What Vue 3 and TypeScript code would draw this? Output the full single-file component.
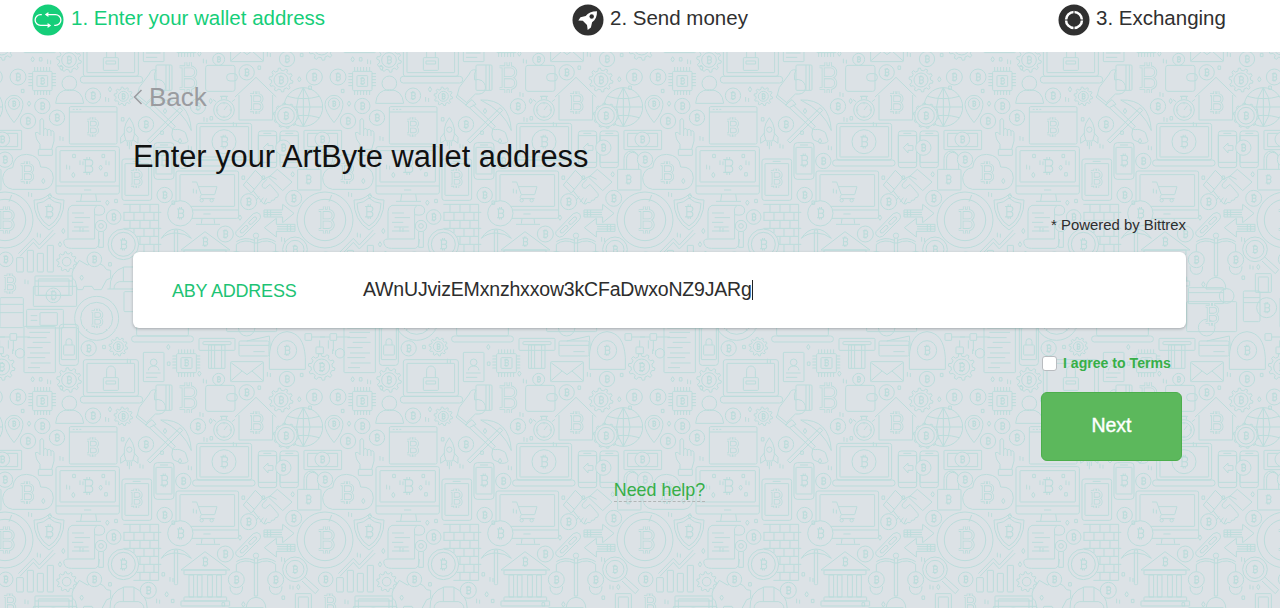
<template>
  <div class="page">
    <header class="steps">
      <div class="step step--active">
        <svg class="step-icon" viewBox="0 0 32 32" aria-hidden="true">
          <circle cx="16" cy="16" r="15.5" fill="currentColor" />
          <g fill="none" stroke="#fff" stroke-width="1.3">
            <path d="M9.800 10.600H8.500a5.400 5.400 0 0 0 0 10.800h9.300" />
            <path d="M22.200 21.400h1.300a5.400 5.400 0 0 0 0-10.800h-9.300" />
          </g>
          <path d="M12.800 10.600l3.600-2.500v5zM19.200 21.400l-3.600-2.500v5z" fill="#fff" />
        </svg>
        <span class="step-label">1. Enter your wallet address</span>
      </div>
      <div class="step">
        <svg class="step-icon" viewBox="0 0 32 32" aria-hidden="true">
          <circle cx="16" cy="16" r="15.5" fill="currentColor" />
          <path
            d="M25 7.200c-5.400.1-9 1.500-11.300 4.700l-5.200 1.300-2.200 3.300 4.500.3 4.200 4.200.7 5 3.200-2.500 1.200-5.300c3.500-2.500 5-5.900 4.900-11z"
            fill="#fff"
          />
          <circle cx="19.700" cy="12.500" r="2.200" fill="currentColor" />
        </svg>
        <span class="step-label">2. Send money</span>
      </div>
      <div class="step">
        <svg class="step-icon" viewBox="0 0 32 32" aria-hidden="true">
          <circle cx="16" cy="16" r="15.5" fill="currentColor" />
          <circle cx="16" cy="16" r="8" fill="none" stroke="#fff" stroke-width="2.500" />
          <path d="M16 6v4M16 22v4M6 16h4M22 16h4" stroke="currentColor" stroke-width="1" />
        </svg>
        <span class="step-label">3. Exchanging</span>
      </div>
    </header>

    <main class="content">
      <svg class="backdrop" aria-hidden="true">
        <defs>
          <g id="doodles" fill="none" stroke="#bbdcdb" stroke-width="3" stroke-linejoin="round">
            <path v-for="(d, i) in shapes" :key="`s${i}`" :d="d" />
            <g v-for="(b, i) in boxes" :key="`r${i}`">
              <rect :x="b[0]" :y="b[1]" :width="b[2]" :height="b[3]" :rx="b[4]" />
            </g>
            <path v-for="(g, i) in gears" :key="`g${i}`" :d="gearPath(g)" />
            <circle
              v-for="(c, i) in rings"
              :key="`c${i}`"
              :cx="c[0]"
              :cy="c[1]"
              :r="c[2]"
              :fill="c[3] ? '#dce2e6' : 'none'"
            />
            <g
              v-for="(m, i) in marks"
              :key="`m${i}`"
              :transform="`translate(${m[0]} ${m[1]}) scale(${m[2]})`"
            >
              <path :d="coinMark" :stroke-width="(m[3] ? 9 : 3.2) / m[2]" />
              <path v-if="m[3]" :d="coinMark" stroke="#dce2e6" :stroke-width="4 / m[2]" />
            </g>
            <path v-for="(s, i) in sparks" :key="`k${i}`" :d="sparkPath(s, i)" />
          </g>
          <pattern
            id="tile"
            width="960"
            height="960"
            patternUnits="userSpaceOnUse"
            patternTransform="translate(0 279) scale(0.33333)"
          >
            <use
              v-for="(o, i) in offsets"
              :key="i"
              href="#doodles"
              :x="o[0]"
              :y="o[1]"
            />
          </pattern>
        </defs>
        <rect width="100%" height="100%" fill="url(#tile)" />
      </svg>

      <div class="panel">
        <a class="back">
          <svg class="back-icon" viewBox="0 0 10 16" aria-hidden="true">
            <path d="M8.500 1L1.500 8l7 7" fill="none" stroke="currentColor" stroke-width="1.5" />
          </svg>
          <span>Back</span>
        </a>
        <h1 class="title">Enter your ArtByte wallet address</h1>
        <p class="powered">* Powered by Bittrex</p>

        <div class="address-box">
          <span class="address-label">ABY ADDRESS</span>
          <span class="address-value">{{ address }}</span>
          <span class="caret" />
        </div>

        <div class="actions">
          <label class="terms">
            <span class="checkbox" />
            <span>I agree to Terms</span>
          </label>
          <button class="next" type="button">Next</button>
        </div>

        <a class="help">Need help?</a>
      </div>
    </main>
  </div>
</template>

<script setup lang="ts">
import { ref } from 'vue'

const address = ref('AWnUJvizEMxnzhxxow3kCFaDwxoNZ9JARg')

// The backdrop tile is drawn on a 960 unit grid and repeats every 320px
const offsets = [
  [0, 0], [-960, 0], [960, 0], [0, -960], [0, 960], [-960, 960], [960, 960],
]

const coinMark =
  'M-9 -12H3a6 6 0 0 1 0 12H-4M3 0a6 6 0 0 1 0 12H-9M-5 -12V12M-2 -17v5M3 -17v5M-2 12v5M3 12v5'

// x, y, radius
const coins = [
  [266, 52, 23], [54, 198, 24], [127, 285, 23], [84, 330, 23], [171, 320, 23],
  [279, 254, 23], [438, 340, 23], [594, 286, 23], [740, 184, 23], [943, 198, 24],
  [861, 144, 23], [656, 145, 18], [550, 450, 23], [494, 552, 23], [341, 618, 22],
  [746, 572, 24], [881, 562, 24], [676, 669, 24], [709, 746, 24], [827, 746, 24],
  [283, 745, 22], [445, 778, 24], [17, 745, 22], [975, 446, 23], [850, 410, 23],
  [861, 58, 29], [967, 385, 22], [42, 278, 17],
]

// x, y, radius, filled
const rings: number[][] = [
  ...coins.map((c) => [...c, 1]),
  [15, 627, 84, 1], [15, 627, 62, 0],
  [370, 700, 46, 1], [370, 700, 36, 0],
  [541, 607, 38, 1], [672, 392, 36, 0],
  [910, 288, 58, 0], [858, 314, 34, 1], [858, 314, 25, 0],
  [208, 217, 22, 0], [672, 297, 31, 0], [672, 297, 22, 0],
  [461, 94, 10, 0], [388, 356, 8, 0], [303, 645, 17, 1], [303, 645, 7, 0],
  [885, 715, 37, 0], [885, 715, 27, 0],
  [768, 674, 8, 0], [605, 568, 5, 0], [635, 568, 5, 0],
  [355, 47, 15, 0], [207, 147, 22, 0], [370, 256, 15, 0], [843, 207, 21, 0],
  [5, 108, 24, 0], [200, 752, 13, 0], [60, 67, 14, 0],
  [290, 922, 66, 0], [290, 922, 48, 0], [160, 853, 22, 0], [800, 855, 22, 0],
  [920, 890, 30, 0], [740, 950, 25, 0],
]

const marks: number[][] = [
  ...coins.map((c) => [c[0], c[1], c[2] / 30, 0]),
  [18, 627, 2.4, 1], [370, 700, 1.1, 0], [541, 607, 1.1, 0], [672, 392, 1.2, 0],
  [858, 314, 0.8, 0], [563, 200, 2.7, 1], [768, 275, 2, 1], [277, 348, 1.7, 1],
  [80, 485, 2, 1], [264, 465, 1.6, 0], [408, 502, 1.7, 1], [492, 448, 1.2, 0],
  [147, 602, 1.3, 0], [615, 692, 0.9, 0], [925, 505, 0.9, 0], [28, 818, 1.8, 1],
  [127, 210, 0.7, 0], [559, 95, 0.7, 0], [355, 47, 0.6, 0], [207, 147, 0.8, 0],
  [843, 207, 0.8, 0], [370, 256, 0.6, 0], [5, 108, 0.9, 0], [885, 715, 0.8, 0],
  [290, 922, 1.7, 1], [160, 853, 0.9, 0], [755, 910, 2, 1], [920, 890, 1, 0],
]

const gears = [
  [355, 47, 28], [207, 147, 37], [370, 256, 28], [843, 207, 36], [5, 108, 40],
  [200, 752, 30], [858, 314, 38],
]

// x, y, width, height, corner
const boxes = [
  // documents, phones and laptops of the upper rows
  [72, -14, 94, 139, 2], [178, -20, 57, 123, 9], [184, -10, 45, 96, 2], [191, 42, 32, 30, 2],
  [250, 86, 165, 110, 7], [261, 97, 143, 88, 1], [241, 196, 187, 20, 9], [310, 140, 45, 38, 2],
  [318, 150, 29, 9, 0], [430, 64, 62, 88, 2], [597, 22, 108, 36, 3], [609, 32, 84, 9, 2],
  [626, 42, 49, 70, 0], [717, 30, 90, 45, 4], [692, 92, 98, 60, 2],
  [395, 15, 185, 18, 8], [410, -92, 155, 107, 5],
  [530, 68, 59, 57, 3], [543, 80, 33, 32, 2], [98, 181, 58, 58, 3], [111, 194, 32, 32, 2],
  [30, 8, 20, 20, 1], [948, 48, 22, 20, 1], [915, 8, 20, 20, 1],
  [468, 162, 48, 76, 3], [617, 163, 88, 78, 7], [680, 188, 32, 22, 10],
  // middle rows
  [208, 287, 143, 112, 4], [590, 337, 165, 110, 7], [600, 347, 146, 91, 1],
  [578, 447, 187, 18, 8], [775, 360, 55, 110, 8], [840, 360, 55, 110, 8],
  [775, 374, 55, 80, 0], [840, 374, 55, 80, 0], [912, 358, 113, 58, 2], [923, 367, 90, 40, 0],
  [115, 415, 42, 18, 1], [893, 475, 70, 62, 2], [168, 407, 190, 142, 6], [180, 419, 166, 94, 1],
  [366, 444, 89, 124, 7], [375, 458, 71, 95, 1], [462, 395, 60, 110, 10], [468, 409, 48, 80, 1],
  [528, 480, 188, 142, 6], [540, 491, 164, 95, 1],
  // lower rows
  [50, 740, 20, 43, 1], [82, 718, 18, 65, 1], [112, 727, 18, 56, 1], [142, 703, 18, 80, 1],
  [523, 657, 10, 104, 3], [552, 717, 126, 14, 1], [552, 798, 128, 12, 1], [543, 810, 146, 15, 1],
  [567, 732, 14, 66, 0], [592, 732, 14, 66, 0], [623, 732, 14, 66, 0], [650, 732, 14, 66, 0],
  [105, 795, 112, 58, 2], [115, 804, 92, 49, 1], [886, 788, 48, 56, 2], [895, 798, 30, 46, 1],
  [100, 826, 130, 60, 2], [685, 830, 106, 48, 2], [680, 872, 150, 90, 3], [372, 842, 78, 60, 3],
  [0, 860, 70, 90, 3], [850, 840, 50, 92, 4], [80, 895, 110, 56, 3], [120, 905, 52, 38, 1],
]

const shapes = [
  // text lines and stripes
  'M88 4H150M82 20H140M98 34H152M82 50H128M90 66H150M82 80H136M92 96H152M84 110H120',
  'M438 126H482M438 139H472M445 118q2-13 16-13t16 13M634 42V112M644 42V112M665 42V112',
  'M717 43H807M760 62h34M740 30l68-15 3 35M692 94l49 37 49-37M692 150l34-30M790 150l-34-30',
  'M320 140v-22a13 13 0 0 1 26 0v22M198 42v-10a9 9 0 0 1 18 0v10',
  'M808 115V80Q810 6 861 2Q912 6 916 80V115Z',
  'M50 18H90M935 18H975M959 28V48M0 18H30M40 28v32M985 28v25',
  // chip pins
  'M536 68V55M545 68V55M554 68V55M563 68V55M572 68V55M581 68V55M536 125v13M545 125v13M554 125v13M563 125v13M572 125v13M581 125v13',
  'M530 75h-13M530 84h-13M530 93h-13M530 102h-13M530 111h-13M589 75h12M589 84h12M589 93h12M589 102h12M589 111h12',
  'M104 181v-13M113 181v-13M122 181v-13M131 181v-13M140 181v-13M149 181v-13M104 239v13M113 239v13M122 239v13M131 239v13M140 239v13M149 239v13',
  'M98 188H85M98 197H85M98 206H85M98 215H85M98 224H85M156 188h12M156 197h12M156 206h12M156 215h12M156 224h12',
  // person, hand with card
  'M167 277Q170 236 208 236Q247 236 251 277Z',
  'M498 162V238M508 162V238M412 252l28 23 26-26q24 2 28-10 8-15-8-30-12-6-22-2-4-18 4-30-15-4-20 12l-30 40z',
  'M414 250l-6 8 30 24 8-8',
  // house, stopwatch, map pin
  'M705 258L768 199L829 258M717 252V327H818V252M772 200',
  'M665 266v-10h14v10M660 256h24M648 272l-9-7M696 272l9-7M672 297l10-13M672 275v5M672 314v5M650 297h5M689 297h5',
  'M42 335Q15 302 15 280a27 27 0 0 1 54 0Q69 302 42 335Z',
  // globe
  'M910 230V346M852 288H968M862 256Q910 270 958 256M862 320Q910 306 958 320M910 230Q870 288 910 346M910 230Q950 288 910 346',
  // pointing hand
  'M120 415V400Q106 385 106 365q8-5 14 6V327q6-9 11 0V355q7-7 11 2 8-6 11 3 7-4 9 5V390l-7 25',
  'M131 355v20M142 357v18M153 360v15',
  // browser, rocket
  'M208 303H351M218 295h6M228 295h6M238 295h6M378 390q-15-38 10-70 25 32 10 70zM374 365l-12 14v18l14-10M402 365l12 14v18l-14-10M382 393v12M394 393v12M388 393v22',
  // crossed pickaxe and shovel
  'M442 388l98-98 8 8-98 98zM448 290l70 64 8-8-68-66M482 267q86-4 92 92-22-58-92-92zM518 354q-6 18 2 32l24 11q20 0 20-8l-8-25q-20-12-30-8zM448 290l-12-8 20-16 12 14z',
  'M920 475V442a18 18 0 0 1 36 0V475M912 475V442a22 22 0 0 1 44 0',
  // phones exchanging
  'M790 367h24M856 367h24M790 410l14-14v8h15v14h-15v8zM480 402h24M398 451h24',
  // cloud
  'M38 535Q8 530 8 500Q12 472 38 470Q42 430 80 430Q118 432 122 468Q158 466 160 500Q158 532 132 535Z',
  'M168 525H358M252 537h22M245 549l-3 22M287 549l3 22M228 571H303M528 597H716M610 609h22M606 622l-2 16M642 622l2 16M588 640H660',
  'M576 513h14l14 38h40l7-24H596M604 551q-8 11 2 12h38',
  // shield
  'M147 550Q166 568 192 567Q193 628 147 657Q101 628 102 567Q128 568 147 550Z',
  'M147 561Q163 576 183 577Q181 624 147 645Q113 624 111 577Q131 576 147 561Z',
  // parchment
  'M292 583H216q-12 4-12 18V682M292 583q-12 6-8 26V684H204q-16 0-12 14t22 14h72q12-3 12-28M292 583q22-2 22 16t-30 12M216 606h36M224 620h46M216 634h34M222 648h44M216 660h52M296 661v48h14v-48',
  // brick wall
  'M370 580H476M370 604H484M370 628H476M370 652H484M400 676H476M410 700H484M410 724H476M400 748H476M476 580V748',
  'M390 580v24M420 580v24M450 580v24M372 604v24M402 604v24M432 604v24M462 604v24M390 628v24M420 628v24M450 628v24M402 652v14M432 652v24M462 652v24M420 676v24M450 676v24M432 700v24M462 700v24M420 724v24M450 724v24',
  // handshake
  'M730 522l36-44 24 24-36 44zM740 512l24 24M832 475l44 38-28 26-42-40zM790 505l20-10 20 10M760 540l30 38q10 4 12-4 12 4 12-6 12 2 12-8 12 0 8-12l-24-28-14 12q-14-2-8-14l14-14',
  'M778 556l-8 10M790 560l-10 14M800 562l-8 16',
  // arrows
  'M792 597h56v-17l34 27-34 28v-17h-56zM792 604h54M792 611h54M802 597v20M812 597v20',
  'M885 640h-56v-18l-36 28 36 28v-17h56zM885 647h-54M885 654h-54M872 640v20M862 640v20',
  // chain link
  'M708 662l52-54q12-8 20 2 4 10-2 16l-50 50q-10 6-18-2-5-6-2-12zM720 660l16-16q8-3 8 6l-16 16q-8 2-8-6zM746 634l16-16q8-3 8 6l-16 16q-8 2-8-6z',
  // pickaxe, bank
  'M484 682q18-28 44-28t46 28q-20-16-46-16t-44 16M543 717L615 662L690 717Z',
  // scales
  'M763 682V795h10V682M709 700q25-18 54-4h10q30-14 54 4M709 692q25-16 54-4M827 692q-25-16-54-4M709 700v23M827 700v23M690 766q0 24 19 24t19-24M808 766q0 24 19 24t19-24M738 834q2-33 30-35 28 2 30 35z',
  'M914 738l42 38-10 12-40-38',
  'M55 728L100 682L118 702L160 657M60 736L100 694L118 714L166 666',
  // piggy bank, helmet
  'M238 748l24 14q42-16 58 14l12 2v24l-12 4-16 30h-22l-6-10h-24l-4 10h-16l-6-26q-16-12-6-34zM330 834q-2-52 42-66h28q40 16 42 66M322 834H448M370 768v44M402 768v44M342 834q0-18 16-22h58q16 6 16 22',
  // coin ring divisions
  'M15 543v22M15 689v22M-69 627h22M77 627h22M-44 568l16 15M74 568l-16 15M-44 686l16-15M74 686l-16-15M995 552l-8 20M55 552l-8 20M91 595l-20 8M91 659l-20-8M55 702l-8-20',
  'M105 810H217M0 880H70M0 905H70M850 860h50M850 875h50M92 914h20M92 928h20M685 845H791',
]

const sparks = [
  [38, 62], [98, 145], [122, 145], [143, 152], [184, 170], [312, 48], [382, 90], [505, 48],
  [506, 98], [610, 150], [598, 128], [778, 170], [802, 130], [898, 205], [905, 132], [180, 382],
  [87, 278], [68, 240], [317, 265], [330, 235], [368, 325], [420, 405], [495, 300], [486, 365],
  [565, 410], [540, 390], [634, 322], [612, 325], [632, 270], [222, 435], [200, 468], [220, 492],
  [310, 435], [318, 455], [302, 470], [318, 490], [240, 455], [878, 490], [730, 500], [86, 550],
  [322, 575], [348, 570], [112, 672], [180, 700], [520, 575], [580, 540], [720, 620], [790, 500],
  [240, 655], [190, 660], [490, 730], [510, 745], [500, 790], [518, 810], [870, 768], [895, 768],
  [850, 800], [75, 812], [245, 800], [330, 760], [470, 810], [730, 820], [20, 375], [700, 340],
  [150, 555], [930, 230], [600, 250], [130, 510], [670, 820], [845, 685],
]

function sparkPath([x, y]: number[], i: number): string {
  if (i % 3 === 0) return `M${x} ${y - 7}v14M${x + 9} ${y - 4}v12`
  if (i % 3 === 1) return `M${x} ${y - 8}l5 8-5 8-5-8z`
  return `M${x - 4} ${y - 5}h8v10h-8z`
}

function gearPath([cx, cy, r]: number[]): string {
  const points: string[] = []
  const teeth = 10
  for (let i = 0; i < teeth; i++) {
    const start = (i / teeth) * Math.PI * 2
    const steps = [[0, 0.8], [0.12, 1], [0.42, 1], [0.54, 0.8]]
    for (const [t, k] of steps) {
      const a = start + (t / teeth) * Math.PI * 2
      points.push(`${(cx + Math.cos(a) * r * k).toFixed(1)} ${(cy + Math.sin(a) * r * k).toFixed(1)}`)
    }
  }
  return `M${points.join('L')}Z`
}
</script>

<style>
body {
  margin: 0;
  overflow: hidden;
}
</style>

<style scoped>
.page {
  display: flex;
  flex-direction: column;
  height: 608px;
  font-family: 'Liberation Sans', Arial, sans-serif;
  color: #2d2d2d;
}

.steps {
  box-sizing: border-box;
  display: grid;
  grid-template-columns: 540px 486px auto;
  flex: none;
  height: 52px;
  padding: 4px 0 0 32px;
  background: #fff;
}

.step {
  display: flex;
  align-items: flex-start;
  color: #303030;
}

.step--active {
  color: #15ce79;
}

.step-icon {
  width: 32px;
  height: 32px;
  margin-right: 6px;
}

.step--active .step-icon {
  margin-right: 7px;
}

.step-label {
  font-size: 20.5px;
  line-height: 28px;
  white-space: nowrap;
}

.content {
  position: relative;
  flex: 1;
  background: #dce2e6;
  overflow: hidden;
}

.backdrop {
  position: absolute;
  inset: 0;
  width: 100%;
  height: 100%;
}

.panel {
  position: relative;
  display: flex;
  flex-direction: column;
  width: 1053px;
  margin-left: 133px;
}

.back {
  display: flex;
  align-items: center;
  gap: 6px;
  height: 30px;
  margin-top: 30px;
  font-size: 26px;
  line-height: 30px;
  color: #9a9b9f;
}

.back-icon {
  width: 10px;
  height: 16px;
}

.title {
  margin: 27px 0 0;
  font-size: 30.8px;
  font-weight: 400;
  line-height: 36px;
  color: #111;
}

.powered {
  margin: 41px 0 0;
  font-size: 14.9px;
  line-height: 18px;
  text-align: right;
}

.address-box {
  display: flex;
  align-items: center;
  box-sizing: border-box;
  height: 76px;
  margin-top: 18px;
  padding-left: 39px;
  background: #fff;
  border-radius: 6px;
  box-shadow: 0 1px 3px rgba(0, 0, 0, 0.25);
}

.address-label {
  width: 191px;
  padding-top: 2px;
  font-size: 18px;
  letter-spacing: -0.2px;
  color: #1dc374;
}

.address-value {
  padding-bottom: 1px;
  font-size: 19.500px;
  letter-spacing: -0.18px;
}

.caret {
  width: 1px;
  height: 20px;
  background: #222;
}

.actions {
  display: flex;
  flex-direction: column;
  align-items: flex-start;
  align-self: flex-end;
  width: 145px;
  margin-top: 26px;
}

.terms {
  display: flex;
  align-items: center;
  gap: 6px;
  height: 18px;
  margin-left: 1px;
  font-size: 14.100px;
  font-weight: 700;
  color: #37af48;
  white-space: nowrap;
}

.checkbox {
  box-sizing: border-box;
  width: 15px;
  height: 15px;
  background: #fff;
  border: 1px solid #b9bcc0;
  border-radius: 3px;
}

.next {
  width: 141px;
  height: 69px;
  margin-top: 20px;
  padding: 0 0 2px;
  font-family: inherit;
  font-size: 19.500px;
  color: #fff;
  background: #5cb85c;
  border: 1px solid #4cae4c;
  border-radius: 6px;
  -webkit-text-stroke: 0.4px #fff;
}

.help {
  align-self: center;
  margin: 18px 0 0;
  font-size: 17.900px;
  line-height: 22px;
  color: #37af48;
  border-bottom: 1px dashed #b1b5b5;
}
</style>
